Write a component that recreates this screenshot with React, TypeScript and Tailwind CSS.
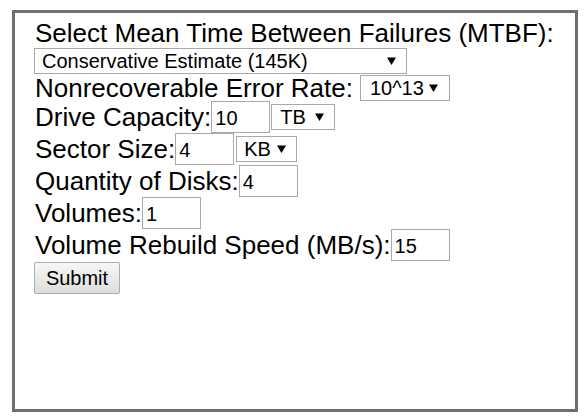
import React from "react";

function Arrow() {
  return (
    <svg width="9" height="8" viewBox="0 0 9 8" className="shrink-0">
      <path d="M0 0.5 H9 L4.5 8 Z" fill="#000" />
    </svg>
  );
}

function FakeSelect({ value, className }: { value: string; className: string }) {
  return (
    <div
      className={
        "flex h-[26px] items-center justify-between border border-[#a9a9a9] bg-white pl-[7px] pr-[10px] text-[20px] leading-none text-black " +
        className
      }
    >
      <span>{value}</span>
      <Arrow />
    </div>
  );
}

function TextBox({ value }: { value: string }) {
  return (
    <input
      defaultValue={value}
      className="h-[32px] w-[59px] border border-[#a9a9a9] bg-white px-[3px] pt-[2px] text-[20px] leading-none text-black outline-none"
    />
  );
}

export default function App() {
  return (
    <div
      className="min-h-[417px] w-[587px] bg-white pl-[12px] pt-[10px]"
      style={{ fontFamily: '"Liberation Sans", Arial, sans-serif' }}
    >
      <div className="h-[402px] w-[566px] border-[3px] border-[#6f6f6f] pl-[20px] pt-[6px] text-[26px] leading-[26px] text-black">
        <div className="flex h-[27px] items-center">
          <span>Select Mean Time Between Failures (MTBF):</span>
        </div>
        <div className="flex h-[29px] items-center">
          <FakeSelect value="Conservative Estimate (145K)" className="-ml-[1px] w-[373px]" />
        </div>
        <div className="flex h-[26px] items-center">
          <span>Nonrecoverable Error Rate:</span>
          <FakeSelect value="10^13" className="ml-[7px] w-[90px] pl-[9px] pr-[11px]" />
        </div>
        <div className="flex h-[32px] items-center">
          <span>Drive Capacity:</span>
          <TextBox value="10" />
          <FakeSelect value="TB" className="ml-[1px] w-[64px] pl-[8px]" />
        </div>
        <div className="flex h-[32px] items-center">
          <span>Sector Size:</span>
          <TextBox value="4" />
          <FakeSelect value="KB" className="ml-[2px] w-[61px]" />
        </div>
        <div className="flex h-[32px] items-center">
          <span>Quantity of Disks:</span>
          <TextBox value="4" />
        </div>
        <div className="flex h-[32px] items-center">
          <span>Volumes:</span>
          <TextBox value="1" />
        </div>
        <div className="flex h-[32px] items-center">
          <span>Volume Rebuild Speed (MB/s):</span>
          <TextBox value="15" />
        </div>
        <div className="flex h-[33px] items-center">
          <button className="-ml-[1px] h-[32px] w-[86px] rounded-[2px] border border-[#adadad] bg-gradient-to-b from-[#f7f7f7] to-[#dddddd] text-[20px] leading-none text-black">
            Submit
          </button>
        </div>
      </div>
    </div>
  );
}
